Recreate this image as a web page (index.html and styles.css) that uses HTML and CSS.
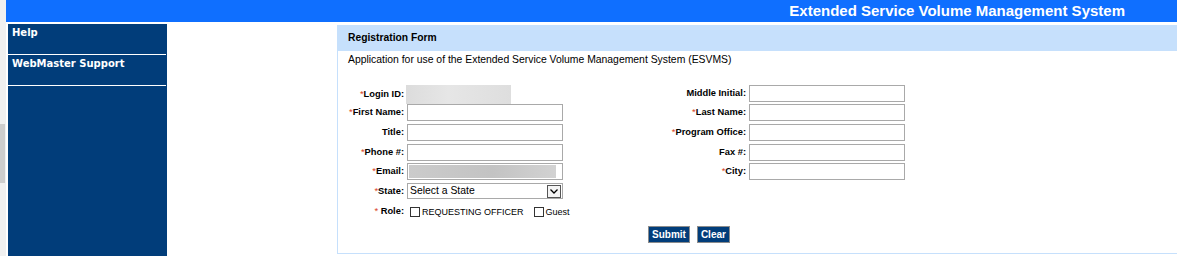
FILE: index.html
```html
<!DOCTYPE html>
<html lang="en">
<head>
<meta charset="utf-8">
<title>ESVMS Registration</title>
<link rel="stylesheet" href="styles.css">
</head>
<body>
<div class="page">
  <div class="edge"><div class="edge-thumb"></div></div>
  <div class="main">
    <header class="topbar">
      <h1 class="app-title">Extended Service Volume Management System</h1>
    </header>
    <div class="content">
      <nav class="sidebar">
        <a class="nav-item" href="#">Help</a>
        <a class="nav-item" href="#">WebMaster Support</a>
      </nav>
      <section class="panel">
        <h2 class="panel-head">Registration Form</h2>
        <div class="panel-body">
          <p class="intro">Application for use of the Extended Service Volume Management System (ESVMS)</p>
          <form class="reg-grid">
            <label class="lbl lbl-tall"><span class="req">*</span>Login ID:</label>
            <div class="readonly-box"></div>
            <label class="lbl">Middle Initial:</label>
            <input class="txt" type="text">

            <label class="lbl"><span class="req">*</span>First Name:</label>
            <input class="txt" type="text">
            <label class="lbl"><span class="req">*</span>Last Name:</label>
            <input class="txt" type="text">

            <label class="lbl">Title:</label>
            <input class="txt" type="text">
            <label class="lbl"><span class="req">*</span>Program Office:</label>
            <input class="txt" type="text">

            <label class="lbl"><span class="req">*</span>Phone #:</label>
            <input class="txt" type="text">
            <label class="lbl">Fax #:</label>
            <input class="txt" type="text">

            <label class="lbl"><span class="req">*</span>Email:</label>
            <input class="txt txt-filled" type="text">
            <label class="lbl"><span class="req">*</span>City:</label>
            <input class="txt" type="text">

            <label class="lbl"><span class="req">*</span>State:</label>
            <div class="select-box">
              <span class="sel-text">Select a State</span>
              <span class="sel-arrow"><svg width="12" height="11" viewBox="0 0 12 11"><path d="M2.5 3.5 L6 7 L9.5 3.5" fill="none" stroke="#000" stroke-width="1.3"/></svg></span>
            </div>
            <span class="filler"></span>

            <label class="lbl"><span class="req">*</span> Role:</label>
            <div class="roles">
              <label class="role"><input class="chk" type="checkbox">REQUESTING OFFICER</label>
              <label class="role"><input class="chk" type="checkbox">Guest</label>
            </div>
          </form>
          <div class="actions">
            <button class="btn" type="button">Submit</button>
            <button class="btn" type="button">Clear</button>
          </div>
        </div>
      </section>
    </div>
  </div>
</div>
</body>
</html>
```
FILE: styles.css
```css
html, body {
  margin: 0;
  padding: 0;
  overflow: hidden;
  background: #ffffff;
}
body {
  font-family: "Liberation Sans", Arial, sans-serif;
  color: #000;
}
.page {
  display: flex;
  min-height: 100vh;
}
.edge {
  width: 6px;
  flex: none;
  background: #f0f0f0;
  padding-top: 124px;
  box-sizing: border-box;
}
.edge-thumb {
  width: 5px;
  height: 59px;
  background: #cdcdcd;
}
.main {
  flex: 1;
  display: flex;
  flex-direction: column;
  min-width: 0;
}
.topbar {
  height: 22px;
  background: #0f6fff;
  display: flex;
  align-items: center;
  justify-content: flex-end;
  padding-right: 52px;
}
.app-title {
  margin: 0;
  font-size: 15px;
  font-weight: bold;
  color: #fff;
  line-height: 22px;
}
.content {
  flex: 1;
  display: flex;
  align-items: flex-start;
  margin-top: 2px;
}
.sidebar {
  flex: none;
  width: 159px;
  margin-left: 2px;
  background: #013d7a;
  align-self: stretch;
  min-height: 240px;
  display: flex;
  flex-direction: column;
}
.nav-item {
  display: block;
  height: 31px;
  box-sizing: border-box;
  margin-right: 1px;
  padding: 3px 0 0 4px;
  font: bold 10px/12px "DejaVu Sans", Verdana, sans-serif;
  color: #fff;
  text-decoration: none;
  border-bottom: 1px solid #fff;
}
.panel {
  flex: 1;
  margin-left: 170px;
  margin-top: 1px;
}
.panel-head {
  margin: 0;
  height: 26px;
  background: #c6e0fc;
  font-size: 10.3px;
  font-weight: bold;
  line-height: 26px;
  padding-left: 11px;
}
.panel-body {
  border-left: 1px solid #c6e0fc;
  border-bottom: 1px solid #c6e0fc;
  padding: 3px 0 10px 0;
}
.intro {
  margin: 0 0 19px 10px;
  font-size: 10.4px;
  line-height: 12px;
}
.reg-grid {
  display: grid;
  grid-template-columns: 66px 156px 180px 156px;
  grid-template-rows: 19px 20px 20px 19px 20px 20px 21px;
  column-gap: 3px;
  align-items: start;
}
.lbl {
  font-size: 9.33px;
  font-weight: bold;
  line-height: 17px;
  text-align: right;
  white-space: nowrap;
}
.lbl-tall {
  line-height: 19px;
}
.req {
  color: #d9411e;
  font-weight: normal;
}
.txt {
  width: 156px;
  height: 17px;
  box-sizing: border-box;
  margin: 0;
  padding: 0 2px;
  border: 1px solid #a9a9a9;
  font: 10.4px "Liberation Sans", Arial, sans-serif;
  background: #fff;
  outline: none;
}
.txt-filled {
  background: linear-gradient(to right, #cbcbcb 0%, #c3c3c3 55%, #d2d2d2 96%, #ffffff 96%);
  box-shadow: inset 0 0 0 1px #fff;
}
.readonly-box {
  width: 105px;
  height: 19px;
  margin-left: -1px;
  background: linear-gradient(to right, #dcdcdc 0%, #e6e6e6 40%, #dedede 100%);
}
.select-box {
  width: 156px;
  height: 16px;
  box-sizing: border-box;
  border: 1px solid #a9a9a9;
  background: #fff;
  display: flex;
  align-items: center;
  justify-content: space-between;
  padding: 0 1px 0 2px;
}
.sel-text {
  font-size: 10.4px;
  line-height: 14px;
  color: #000;
}
.sel-arrow {
  width: 14px;
  height: 13px;
  box-sizing: border-box;
  border: 1px solid #555;
  background: #f4f4f4;
  display: flex;
  align-items: center;
  justify-content: center;
}
.filler {
  grid-column: span 2;
}
.roles {
  grid-column: span 3;
  display: flex;
  align-items: center;
  gap: 10px;
  padding: 3px 0 0 3px;
}
.role {
  display: flex;
  align-items: center;
  gap: 2px;
  font-size: 9px;
  line-height: 12px;
}
.chk {
  appearance: none;
  -webkit-appearance: none;
  width: 10px;
  height: 10px;
  margin: 0;
  border: 1px solid #333;
  background: #fff;
  box-sizing: border-box;
}
.actions {
  display: flex;
  gap: 7px;
  margin-top: 2px;
  padding-left: 310px;
}
.btn {
  height: 17px;
  margin: 0;
  padding: 0 3px;
  border: 1px solid #8c8c8c;
  border-radius: 0;
  background: #013d7a;
  color: #fff;
  font: bold 10px/15px "Liberation Sans", Arial, sans-serif;
  cursor: pointer;
}
```
